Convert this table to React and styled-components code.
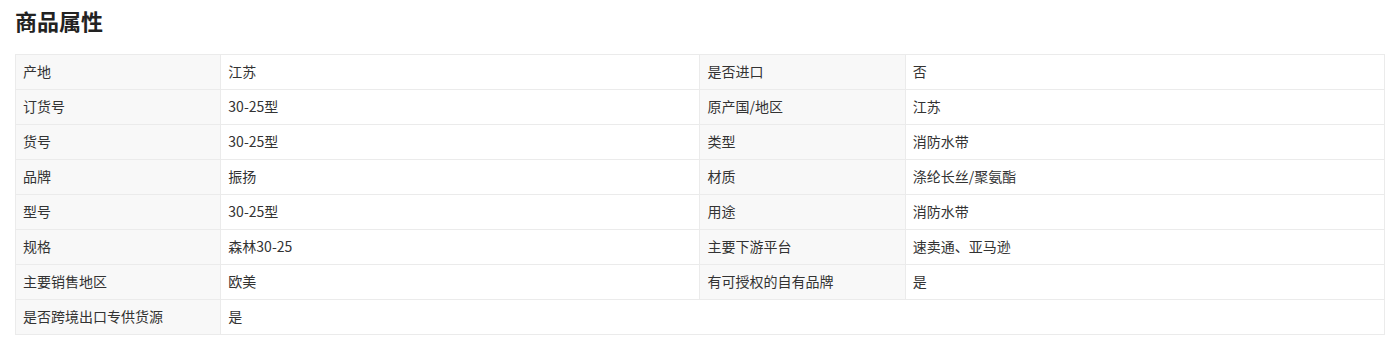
import React from "react"
import styled, { createGlobalStyle } from "styled-components"

const GlobalStyle = createGlobalStyle`
  body {
    margin: 0;
    background: #fff;
    font-family: "Noto Sans CJK SC", "Open Sans", sans-serif;
    color: #333;
  }
`

const Section = styled.div`
  padding: 0 15px;
`

const Title = styled.h2`
  margin: 0 0 14px;
  height: 40px;
  line-height: 40px;
  font-size: 22px;
  font-weight: 700;
  color: #222;
`

const Table = styled.table`
  width: 1370px;
  border-collapse: collapse;
  table-layout: fixed;
  font-size: 14px;
`

const Cell = styled.td`
  height: 32px;
  padding: 0 6px 2px 7px;
  border: 1px solid #ebebeb;
  background: ${(p) => (p.$label ? "#f8f8f8" : "#fff")};
  color: #333;
  white-space: nowrap;
`

const rows = [
  ["产地", "江苏", "是否进口", "否"],
  ["订货号", "30-25型", "原产国/地区", "江苏"],
  ["货号", "30-25型", "类型", "消防水带"],
  ["品牌", "振扬", "材质", "涤纶长丝/聚氨酯"],
  ["型号", "30-25型", "用途", "消防水带"],
  ["规格", "森林30-25", "主要下游平台", "速卖通、亚马逊"],
  ["主要销售地区", "欧美", "有可授权的自有品牌", "是"],
]

export default function App() {
  return (
    <Section>
      <GlobalStyle />
      <Title>商品属性</Title>
      <Table>
        <colgroup>
          <col style={{ width: "15%" }} />
          <col style={{ width: "35%" }} />
          <col style={{ width: "15%" }} />
          <col style={{ width: "35%" }} />
        </colgroup>
        <tbody>
          {rows.map((r, i) => (
            <tr key={i}>
              <Cell $label>{r[0]}</Cell>
              <Cell>{r[1]}</Cell>
              <Cell $label>{r[2]}</Cell>
              <Cell>{r[3]}</Cell>
            </tr>
          ))}
          <tr>
            <Cell $label>是否跨境出口专供货源</Cell>
            <Cell colSpan={3}>是</Cell>
          </tr>
        </tbody>
      </Table>
    </Section>
  )
}
